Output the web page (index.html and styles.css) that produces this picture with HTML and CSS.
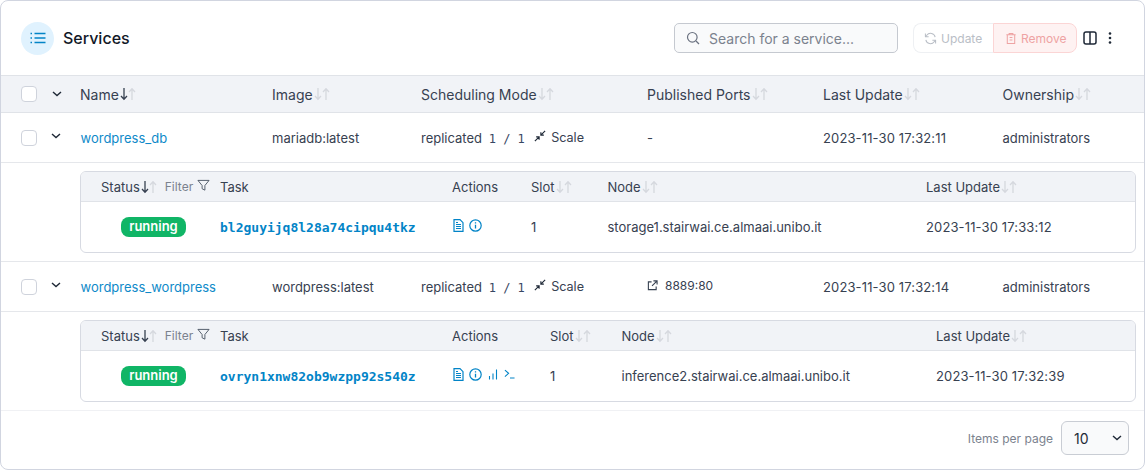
FILE: index.html
```html
<!DOCTYPE html>
<html lang="en">
<head>
<meta charset="utf-8">
<title>Services</title>
<link rel="stylesheet" href="styles.css">
</head>
<body>
<svg class="defs" width="0" height="0" aria-hidden="true">
  <symbol id="down" viewBox="0 0 8 14"><path d="M4 1v11M1 9l3 3.2L7 9" fill="none" stroke="currentColor" stroke-width="1.3"/></symbol>
  <symbol id="up" viewBox="0 0 8 14"><path d="M4 13V2M1 5l3-3.2L7 5" fill="none" stroke="currentColor" stroke-width="1.3"/></symbol>
  <symbol id="chev" viewBox="0 0 10 6"><path d="M1 1l4 3.6L9 1" fill="none" stroke="currentColor" stroke-width="1.4"/></symbol>
  <symbol id="scale" viewBox="0 0 14 14"><path d="M13 1L8 6M8 2.500V6h3.500M1 13l5-5M2.500 8H6v3.500" fill="none" stroke="currentColor" stroke-width="1.300"/></symbol>
  <symbol id="funnel" viewBox="0 0 14 14"><path d="M1 1.500h12L8.500 7v5L5.500 10.500V7z" fill="none" stroke="currentColor" stroke-width="1"/></symbol>
  <symbol id="doc" viewBox="0 0 11 13"><path d="M1 .7h6l3 3v8.600H1zM3 5.500h5M3 7.500h5M3 9.500h5M3 3.500h2" fill="none" stroke="currentColor" stroke-width="1.200"/></symbol>
  <symbol id="info" viewBox="0 0 13 13"><circle cx="6.500" cy="6.500" r="5.700" fill="none" stroke="currentColor" stroke-width="1.200"/><path d="M6.500 5.800V9.500M6.500 3.300v1.300" fill="none" stroke="currentColor" stroke-width="1.300"/></symbol>
  <symbol id="bars" viewBox="0 0 10 11"><path d="M1.500 7v3.500M5 4.500v6M8.500 .5v10" fill="none" stroke="currentColor" stroke-width="1.100"/></symbol>
  <symbol id="term" viewBox="0 0 12 10"><path d="M1 .8L5 4.300 1 7.800M6.500 9.300H11.500" fill="none" stroke="currentColor" stroke-width="1.200"/></symbol>
</svg>

<main class="card">
  <header class="top">
    <div class="title-wrap">
      <span class="badge-icon">
        <svg width="16" height="12" viewBox="0 0 16 12"><path d="M4.500 1.500h11M4.500 6h11M4.500 10.500h11" stroke="#0284c7" stroke-width="1.400" fill="none"/><path d="M.500 1.500h1.500M.500 6h1.500M.500 10.500h1.500" stroke="#0284c7" stroke-width="1.400" fill="none"/></svg>
      </span>
      <h1>Services</h1>
    </div>
    <div class="tools">
      <label class="search">
        <svg width="14" height="14" viewBox="0 0 14 14"><circle cx="6.300" cy="6.300" r="4.800" fill="none" stroke="#6b7280" stroke-width="1.200"/><path d="M10 10l3 3" stroke="#6b7280" stroke-width="1.200"/></svg>
        <span>Search for a service...</span>
      </label>
      <div class="btn-group">
        <span class="btn btn-update">
          <svg width="13" height="13" viewBox="0 0 14 14"><path d="M12 5.500A5 5 0 0 0 3 3.500L1.500 5M2 8.500a5 5 0 0 0 9 2L12.500 9M1.500 1.500V5H5M12.500 12.500V9H9" fill="none" stroke="currentColor" stroke-width="1.100"/></svg>
          Update
        </span>
        <span class="btn btn-remove">
          <svg width="12" height="13" viewBox="0 0 12 14"><path d="M1 3h10M4 3V1.500h4V3M2 3v9.500h8V3M4.500 6h3M4.500 8.500h3" fill="none" stroke="currentColor" stroke-width="1.100"/></svg>
          Remove
        </span>
      </div>
      <svg class="cols" width="14" height="14" viewBox="0 0 14 14"><rect x="1" y="1" width="12" height="12" rx="2" fill="none" stroke="#1f2937" stroke-width="1.500"/><path d="M7 1v12" stroke="#1f2937" stroke-width="1.500"/></svg>
      <svg class="dots" width="4" height="12" viewBox="0 0 4 12"><circle cx="2" cy="1.500" r="1.300" fill="#1f2937"/><circle cx="2" cy="6" r="1.300" fill="#1f2937"/><circle cx="2" cy="10.500" r="1.300" fill="#1f2937"/></svg>
    </div>
  </header>

  <div class="row head">
    <span class="check"></span>
    <svg class="chev" width="10" height="6"><use href="#chev"/></svg>
    <span class="th">Name<svg class="s on"><use href="#down"/></svg><svg class="s"><use href="#up"/></svg></span>
    <span class="th">Image<svg class="s"><use href="#down"/></svg><svg class="s"><use href="#up"/></svg></span>
    <span class="th">Scheduling Mode<svg class="s"><use href="#down"/></svg><svg class="s"><use href="#up"/></svg></span>
    <span class="th">Published Ports<svg class="s"><use href="#down"/></svg><svg class="s"><use href="#up"/></svg></span>
    <span class="th">Last Update<svg class="s"><use href="#down"/></svg><svg class="s"><use href="#up"/></svg></span>
    <span class="th">Ownership<svg class="s"><use href="#down"/></svg><svg class="s"><use href="#up"/></svg></span>
  </div>

  <div class="row body">
    <span class="check"></span>
    <svg class="chev" width="10" height="6"><use href="#chev"/></svg>
    <a class="link">wordpress_db</a>
    <span>mariadb:latest</span>
    <span class="mode">replicated <code>1 / 1</code> <svg class="ic-scale" width="12" height="12"><use href="#scale"/></svg> <em>Scale</em></span>
    <span>-</span>
    <span class="date">2023-11-30 17:32:11</span>
    <span>administrators</span>
  </div>
  <section class="detail">
    <div class="sub">
      <div class="sub-row sub-head cols-a">
        <span class="th status-th">Status<svg class="s on"><use href="#down"/></svg><svg class="s"><use href="#up"/></svg><i>Filter</i><svg class="funnel" width="13" height="13"><use href="#funnel"/></svg></span>
        <span>Task</span>
        <span>Actions</span>
        <span class="th">Slot<svg class="s"><use href="#down"/></svg><svg class="s"><use href="#up"/></svg></span>
        <span class="th">Node<svg class="s"><use href="#down"/></svg><svg class="s"><use href="#up"/></svg></span>
        <span class="th">Last Update<svg class="s"><use href="#down"/></svg><svg class="s"><use href="#up"/></svg></span>
      </div>
      <div class="sub-row sub-body cols-a">
        <span class="status"><b class="pill">running</b></span>
        <a class="task">bl2guyijq8l28a74cipqu4tkz</a>
        <span class="actions">
          <svg width="11" height="13"><use href="#doc"/></svg>
          <svg width="13" height="13"><use href="#info"/></svg>
        </span>
        <span>1</span>
        <span>storage1.stairwai.ce.almaai.unibo.it</span>
        <span class="date">2023-11-30 17:33:12</span>
      </div>
    </div>
  </section>

  <div class="row body">
    <span class="check"></span>
    <svg class="chev" width="10" height="6"><use href="#chev"/></svg>
    <a class="link">wordpress_wordpress</a>
    <span>wordpress:latest</span>
    <span class="mode">replicated <code>1 / 1</code> <svg class="ic-scale" width="12" height="12"><use href="#scale"/></svg> <em>Scale</em></span>
    <span class="port">
      <svg width="11" height="11" viewBox="0 0 12 12"><path d="M5 2H1.500v8.500H10V7M7 1h4v4M11 1L5.500 6.500" fill="none" stroke="#374151" stroke-width="1.200"/></svg>
      8889:80
    </span>
    <span class="date">2023-11-30 17:32:14</span>
    <span>administrators</span>
  </div>
  <section class="detail last">
    <div class="sub">
      <div class="sub-row sub-head cols-b">
        <span class="th status-th">Status<svg class="s on"><use href="#down"/></svg><svg class="s"><use href="#up"/></svg><i>Filter</i><svg class="funnel" width="13" height="13"><use href="#funnel"/></svg></span>
        <span>Task</span>
        <span>Actions</span>
        <span class="th">Slot<svg class="s"><use href="#down"/></svg><svg class="s"><use href="#up"/></svg></span>
        <span class="th">Node<svg class="s"><use href="#down"/></svg><svg class="s"><use href="#up"/></svg></span>
        <span class="th">Last Update<svg class="s"><use href="#down"/></svg><svg class="s"><use href="#up"/></svg></span>
      </div>
      <div class="sub-row sub-body cols-b">
        <span class="status"><b class="pill">running</b></span>
        <a class="task">ovryn1xnw82ob9wzpp92s540z</a>
        <span class="actions">
          <svg width="11" height="13"><use href="#doc"/></svg>
          <svg width="13" height="13"><use href="#info"/></svg>
          <svg class="bars" width="10" height="11"><use href="#bars"/></svg>
          <svg class="term" width="12" height="10"><use href="#term"/></svg>
        </span>
        <span>1</span>
        <span>inference2.stairwai.ce.almaai.unibo.it</span>
        <span class="date">2023-11-30 17:32:39</span>
      </div>
    </div>
  </section>

  <footer class="foot">
    <span class="ipp">Items per page</span>
    <span class="select">10<svg width="10" height="6"><use href="#chev"/></svg></span>
  </footer>
</main>
</body>
</html>
```
FILE: styles.css
```css
* { box-sizing: border-box; }
html, body { margin: 0; padding: 0; background: #fff; }
body { font-family: Inter, "Liberation Sans", sans-serif; font-size: 13px; color: #374151; width: 1145px; height: 470px; overflow: hidden; }
.defs { position: absolute; }

.card { width: 1145px; height: 470px; border: 1px solid #d1d5e0; border-radius: 8px; overflow: hidden; background: #fff; }

.top { height: 74px; display: flex; justify-content: space-between; align-items: center; padding: 0 32px 0 20px; }
.title-wrap { display: flex; align-items: center; gap: 9px; }
.badge-icon { width: 33px; height: 33px; border-radius: 50%; background: #e0f2fe; display: flex; align-items: center; justify-content: center; }
h1 { margin: 0; font-size: 16px; font-weight: 500; color: #111827; }

.tools { display: flex; align-items: center; }
.search { width: 224px; height: 30px; border: 1px solid #c5c9d0; border-radius: 5px; background: #f9fafb; display: flex; align-items: center; gap: 9px; padding-left: 11px; font-size: 14px; color: #7b828e; }
.btn-group { margin-left: 15px; display: flex; height: 30px; font-size: 12px; }
.btn { display: flex; align-items: center; gap: 4px; border: 1px solid #eef0f3; }
.btn-update { width: 80px; padding-left: 10px; border-radius: 8px 0 0 8px; color: #b9bec6; border-right: 0; }
.btn-remove { width: 84px; padding-left: 11px; border-radius: 0 8px 8px 0; background: #fef2f2; border-color: #fbd5d5; color: #eea3a3; }
.cols { margin-left: 6px; }
.dots { margin-left: 11px; }

.row { display: grid; grid-template-columns: 30px 29px 192px 149px 226px 176px 179.500px 1fr; align-items: center; padding-left: 20px; }
.head { height: 38px; background: #f1f3f7; border-top: 1px solid #e0e3e8; border-bottom: 1px solid #e0e3e8; font-size: 14px; }
.body { height: 50px; border-bottom: 1px solid #e5e7eb; }
.head > *, .body > * { white-space: nowrap; }
.check { width: 16px; height: 16px; border: 1px solid #cfd3dc; border-radius: 4px; background: #fff; }
.chev { color: #1f2937; margin-left: 1px; }
.body .chev { margin-top: -4px; margin-left: 0; }
.th { display: flex; align-items: center; }
.s { width: 8px; height: 14px; color: #d5d8de; margin-left: 1px; }
.s + .s { margin-left: 0; }
.s.on { color: #374151; }
.link { color: #0f8ac9; font-size: 13px; padding-left: .5px; }
.date { letter-spacing: .13px; }
.mode code { font-family: "DejaVu Sans Mono", monospace; font-size: 12px; color: #374763; margin: 0 6px 0 3px; }
.mode em { font-style: normal; font-size: 12.600px; position: relative; top: -1px; margin-left: 1px; }
.ic-scale { color: #1f2937; position: relative; top: -1px; }
.port { display: flex; align-items: center; gap: 7px; font-size: 12px; margin-top: -2px; }

.detail { height: 99px; padding: 8px 8px 8px 79px; border-bottom: 1px solid #e5e7eb; }
.detail.last { border-bottom-color: #f0f1f4; }
.sub { height: 82px; border: 1px solid #d7dae2; border-radius: 6px; overflow: hidden; }
.sub-row { display: grid; align-items: center; white-space: nowrap; }
.cols-a { grid-template-columns: 139px 232px 79px 76.500px 318.500px 1fr; }
.cols-b { grid-template-columns: 139px 232px 98px 71.500px 314.500px 1fr; }
.sub-head { height: 30px; background: #f1f3f7; border-bottom: 1px solid #e0e3e8; }
.sub-body { height: 50px; }
.status-th { padding-left: 20px; }
.status-th i { font-style: normal; font-size: 12px; color: #7b828e; margin-left: 8px; }
.funnel { color: #4b5563; margin: -3px 0 0 4px; }
.status { padding-left: 40px; }
.pill { display: inline-block; height: 20px; width: 65px; line-height: 19px; text-align: center; border-radius: 8px; background: #10b566; color: #fff; font-weight: 600; font-size: 13px; }
.task { font-family: "DejaVu Sans Mono", monospace; font-weight: 700; font-size: 13px; color: #0284c7; }
.actions { display: flex; align-items: center; gap: 5px; color: #0284c7; margin: -4px 0 0 1px; }
.bars { margin-left: 1px; }
.term { margin: -1px 0 0 1px; width: 11px; }

.foot { height: 58px; display: flex; justify-content: flex-end; align-items: center; padding: 0 15px 4px 0; }
.ipp { font-size: 12px; color: #7b828e; margin-right: 8px; }
.select { width: 68px; height: 34px; border: 1px solid #c9cdd4; border-radius: 6px; background: #f9fafb; display: flex; align-items: center; justify-content: space-between; padding: 0 6px 0 12px; font-size: 14px; color: #1f2937; }
```
